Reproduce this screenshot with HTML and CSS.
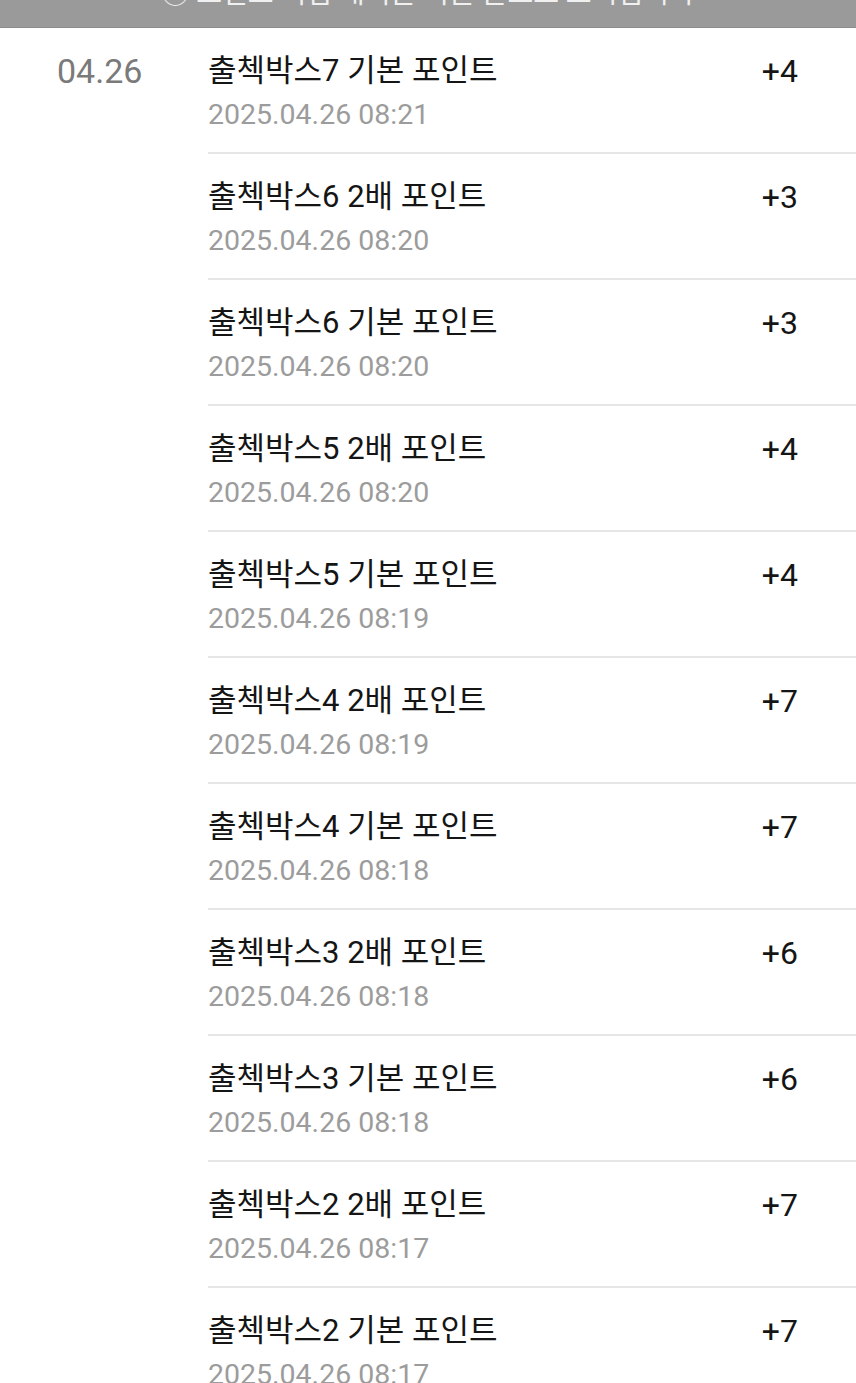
FILE: index.html
```html
<!DOCTYPE html>
<html lang="ko">
<head>
    <meta charset="UTF-8">
    <meta name="viewport" content="width=device-width, initial-scale=1.0">
    <title>포인트 내역</title>
    <link rel="stylesheet" href="styles.css">
</head>
<body>
    <div class="notice">
        <span class="notice-text">ⓘ 포인트 적립 내역은 최근 순으로 표시됩니다</span>
    </div>

    <div class="day">
        <div class="day-label">04.26</div>
        <ul class="history">
            <li class="item">
                <div class="info">
                    <div class="title">출첵박스7 기본 포인트</div>
                    <div class="time">2025.04.26 08:21</div>
                </div>
                <div class="amount">+4</div>
            </li>
            <li class="item">
                <div class="info">
                    <div class="title">출첵박스6 2배 포인트</div>
                    <div class="time">2025.04.26 08:20</div>
                </div>
                <div class="amount">+3</div>
            </li>
            <li class="item">
                <div class="info">
                    <div class="title">출첵박스6 기본 포인트</div>
                    <div class="time">2025.04.26 08:20</div>
                </div>
                <div class="amount">+3</div>
            </li>
            <li class="item">
                <div class="info">
                    <div class="title">출첵박스5 2배 포인트</div>
                    <div class="time">2025.04.26 08:20</div>
                </div>
                <div class="amount">+4</div>
            </li>
            <li class="item">
                <div class="info">
                    <div class="title">출첵박스5 기본 포인트</div>
                    <div class="time">2025.04.26 08:19</div>
                </div>
                <div class="amount">+4</div>
            </li>
            <li class="item">
                <div class="info">
                    <div class="title">출첵박스4 2배 포인트</div>
                    <div class="time">2025.04.26 08:19</div>
                </div>
                <div class="amount">+7</div>
            </li>
            <li class="item">
                <div class="info">
                    <div class="title">출첵박스4 기본 포인트</div>
                    <div class="time">2025.04.26 08:18</div>
                </div>
                <div class="amount">+7</div>
            </li>
            <li class="item">
                <div class="info">
                    <div class="title">출첵박스3 2배 포인트</div>
                    <div class="time">2025.04.26 08:18</div>
                </div>
                <div class="amount">+6</div>
            </li>
            <li class="item">
                <div class="info">
                    <div class="title">출첵박스3 기본 포인트</div>
                    <div class="time">2025.04.26 08:18</div>
                </div>
                <div class="amount">+6</div>
            </li>
            <li class="item">
                <div class="info">
                    <div class="title">출첵박스2 2배 포인트</div>
                    <div class="time">2025.04.26 08:17</div>
                </div>
                <div class="amount">+7</div>
            </li>
            <li class="item">
                <div class="info">
                    <div class="title">출첵박스2 기본 포인트</div>
                    <div class="time">2025.04.26 08:17</div>
                </div>
                <div class="amount">+7</div>
            </li>
        </ul>
    </div>
</body>
</html>
```

FILE: styles.css
```css
body {
    margin: 0;
    font-family: Roboto, "Noto Sans CJK KR", sans-serif;
    background: #fff;
    overflow: hidden;
}
.notice {
    height: 27px;
    background-color: #9a9a9a;
    border-bottom: 1px solid #8c8c8c;
    overflow: hidden;
    text-align: center;
}
.notice-text {
    display: block;
    margin-top: -24px;
    color: #f0f0f0;
    font-size: 28px;
    line-height: 36px;
}
.day {
    display: flex;
}
.day-label {
    width: 151px;
    padding-left: 57px;
    padding-top: 23px;
    font-size: 34px;
    line-height: 40px;
    color: #7a7a7a;
}
.history {
    flex: 1;
    list-style: none;
    margin: 0;
    padding: 0;
}
.item {
    display: flex;
    justify-content: space-between;
    padding: 23px 58px 18px 0;
    border-bottom: 2px solid #e6e6e6;
}
.title {
    font-size: 31px;
    line-height: 40px;
    color: #151515;
}
.time {
    margin-top: 5px;
    font-size: 28.5px;
    line-height: 38px;
    color: #9c9c9c;
}
.amount {
    font-size: 32px;
    line-height: 40px;
    color: #151515;
}
```
